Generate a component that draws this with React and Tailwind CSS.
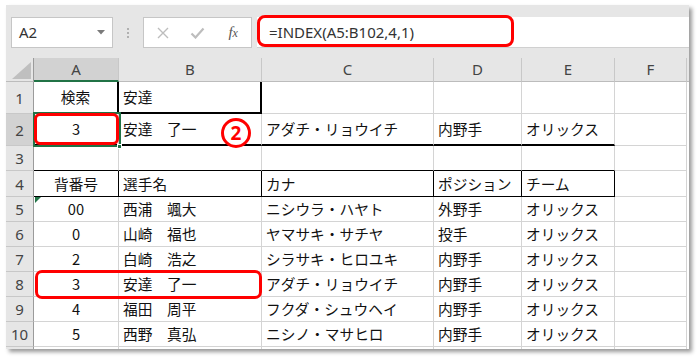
import React from "react";

const W = ["w-[28px]", "w-[85px]", "w-[143px]", "w-[172px]", "w-[88px]", "w-[93px]", "w-[72px]"];
const CJK = { fontFamily: '"Noto Sans CJK JP", "Noto Sans", sans-serif' };
const UI = { fontFamily: '"Noto Sans", "Open Sans", sans-serif' };

const N = "border-r border-b border-r-[#d4d4d4] border-b-[#d4d4d4]";
const T2 = "border-r-2 border-b-2 border-r-black border-b-black";
const B2 = "border-r border-b-2 border-r-[#d4d4d4] border-b-black";
const B1 = "border-r border-b border-r-[#d4d4d4] border-b-black";
const BX = "border-r border-b border-r-black border-b-black";

const rows = [
  { n: "1", h: "h-[32px]", cells: [["検索", T2, "c"], ["安達", T2], ["", N], ["", N], ["", N], ["", N]] },
  { n: "2", h: "h-[32px]", sel: true, cells: [["3", B2, "c"], ["安達　了一", B2], ["アダチ・リョウイチ", B2], ["内野手", B2], ["オリックス", B2], ["", N]] },
  { n: "3", h: "h-[25px]", cells: [["", B1], ["", B1], ["", B1], ["", B1], ["", B1], ["", N]] },
  { n: "4", h: "h-[26px]", cells: [["背番号", BX, "c"], ["選手名", BX], ["カナ", BX], ["ポジション", BX], ["チーム", BX], ["", N]] },
  { n: "5", h: "h-[25px]", cells: [["00", N, "c"], ["西浦　颯大", N], ["ニシウラ・ハヤト", N], ["外野手", N], ["オリックス", N], ["", N]] },
  { n: "6", h: "h-[25px]", cells: [["0", N, "c"], ["山崎　福也", N], ["ヤマサキ・サチヤ", N], ["投手", N], ["オリックス", N], ["", N]] },
  { n: "7", h: "h-[25px]", cells: [["2", N, "c"], ["白崎　浩之", N], ["シラサキ・ヒロユキ", N], ["内野手", N], ["オリックス", N], ["", N]] },
  { n: "8", h: "h-[25px]", cells: [["3", N, "c"], ["安達　了一", N], ["アダチ・リョウイチ", N], ["内野手", N], ["オリックス", N], ["", N]] },
  { n: "9", h: "h-[25px]", cells: [["4", N, "c"], ["福田　周平", N], ["フクダ・シュウヘイ", N], ["内野手", N], ["オリックス", N], ["", N]] },
  { n: "10", h: "h-[25px]", cells: [["5", N, "c"], ["西野　真弘", N], ["ニシノ・マサヒロ", N], ["内野手", N], ["オリックス", N], ["", N]] },
];

function Row({ r }) {
  return (
    <div className={`flex shrink-0 ${r.h}`}>
      <div
        className={`${W[0]} h-full shrink-0 flex items-center justify-center border-b border-b-[#c8c8c8] border-r border-r-[#9b9b9b] text-[15px] text-[#444] pt-[1px] ${r.sel ? "bg-[#d2d2d2]" : "bg-[#e6e6e6]"}`}
        style={UI}
      >
        {r.n}
      </div>
      {r.cells.map((c, i) => (
        <div
          key={i}
          className={`${W[i + 1]} h-full shrink-0 box-border bg-white flex items-center overflow-hidden whitespace-nowrap text-[14.7px] text-[#111] pt-[1px] ${c[1]} ${c[2] === "c" ? "justify-center" : "pl-[4px]"}`}
          style={CJK}
        >
          {c[0]}
        </div>
      ))}
      <div className="flex-1 h-full bg-white" />
    </div>
  );
}

export default function App() {
  return (
    <div className="relative w-[698px] h-[361px] bg-white overflow-hidden">
      <div className="absolute left-[6px] top-[5px] w-[683px] h-[344px] bg-[#e6e6e6] shadow-[3px_3px_4px_rgba(0,0,0,0.4)] overflow-hidden flex flex-col">
        {/* toolbar */}
        <div className="h-[43px] shrink-0 flex items-start pt-[12px]">
          <div className="ml-[5px] w-[102px] h-[31px] bg-white border border-[#c6c6c6] flex items-center justify-between pl-[7px] pr-[7px]">
            <span className="text-[15px] text-[#333]" style={UI}>A2</span>
            <svg width="8" height="5" viewBox="0 0 8 5"><path d="M0 0h8L4 4.5z" fill="#7a7a7a" /></svg>
          </div>
          <div className="w-[30px] h-[31px] flex flex-col items-center justify-center gap-[2px]">
            <div className="w-[2px] h-[2px] bg-[#b0b0b0]" />
            <div className="w-[2px] h-[2px] bg-[#b0b0b0]" />
            <div className="w-[2px] h-[2px] bg-[#b0b0b0]" />
          </div>
          <div className="w-[109px] h-[31px] bg-white border border-[#c6c6c6] flex items-center">
            <div className="w-[36px] flex justify-center pl-[2px]">
              <svg width="12" height="12" viewBox="0 0 12 12"><path d="M1 1L11 11M11 1L1 11" stroke="#bdbdbd" strokeWidth="1.4" /></svg>
            </div>
            <div className="w-[36px] flex justify-center">
              <svg width="15" height="12" viewBox="0 0 15 12"><path d="M1.5 6.5L5.5 10.5L13.5 1.5" stroke="#bdbdbd" strokeWidth="2.2" fill="none" /></svg>
            </div>
            <div className="w-[36px] flex justify-center">
              <span className="italic text-[15px] text-[#555] leading-none" style={{ fontFamily: '"Liberation Serif", serif' }}>
                f<span className="text-[12px]">x</span>
              </span>
            </div>
          </div>
          <div className="ml-[5px] flex-1 h-[31px] bg-white border-b border-[#d0d0d0] flex items-center pl-[12px]">
            <span className="text-[15px] text-[#333]" style={UI}>=INDEX(A5:B102,4,1)</span>
          </div>
        </div>
        <div className="h-[10px] shrink-0" />
        {/* column header */}
        <div className="h-[24px] shrink-0 flex">
          <div className={`${W[0]} h-full shrink-0 flex items-end justify-end border-r border-r-[#9b9b9b] border-b border-b-[#bcbcbc] pr-[2px] pb-[2px]`}>
            <svg width="19" height="17" viewBox="0 0 19 17"><path d="M19 0V17H0z" fill="#bfbfbf" /></svg>
          </div>
          {["A", "B", "C", "D", "E", "F"].map((l, i) => (
            <div
              key={l}
              className={`${W[i + 1]} h-full shrink-0 flex items-center justify-center text-[15px] text-[#444] border-r border-r-[#c8c8c8] ${i === 0 ? "bg-[#d2d2d2] border-b-2 border-b-[#217346]" : "bg-[#e6e6e6] border-b border-b-[#bcbcbc]"}`}
              style={UI}
            >
              {l}
            </div>
          ))}
          <div className="flex-1 h-full border-b border-b-[#bcbcbc]" />
        </div>
        {rows.map((r) => (
          <Row key={r.n} r={r} />
        ))}
        <div className="flex shrink-0 h-[10px]">
          <div className={`${W[0]} h-full shrink-0 bg-[#e6e6e6] border-r border-r-[#9b9b9b]`} />
          {[1, 2, 3, 4, 5, 6].map((i) => (
            <div key={i} className={`${W[i]} h-full shrink-0 bg-white border-r border-r-[#d4d4d4]`} />
          ))}
          <div className="flex-1 h-full bg-white" />
        </div>
      </div>

      {/* selection */}
      <div className="absolute left-[33px] top-[112px] w-[88px] h-[35px] border-2 border-[#217346]" />
      <div className="absolute left-[117px] top-[144px] w-[5px] h-[5px] bg-[#217346] border border-white" />
      {/* error triangle A5 */}
      <svg className="absolute left-[35px] top-[197px]" width="6" height="6" viewBox="0 0 6 6"><path d="M0 0H6L0 6z" fill="#217346" /></svg>

      {/* red highlights */}
      <div className="absolute left-[257px] top-[15px] w-[257px] h-[32px] border-[3px] border-[#ff0000] rounded-[8px]" />
      <div className="absolute left-[34px] top-[113px] w-[85px] h-[32px] border-[3px] border-[#ff0000] rounded-[6px]" />
      <div className="absolute left-[35px] top-[270px] w-[227px] h-[29px] border-[3px] border-[#ff0000] rounded-[7px]" />
      <div className="absolute left-[221px] top-[118px] w-[30px] h-[30px] border-[3px] border-[#ff0000] rounded-full bg-white flex items-center justify-center">
        <span className="text-[19px] font-bold text-[#ff0000] leading-none" style={UI}>2</span>
      </div>
    </div>
  );
}
